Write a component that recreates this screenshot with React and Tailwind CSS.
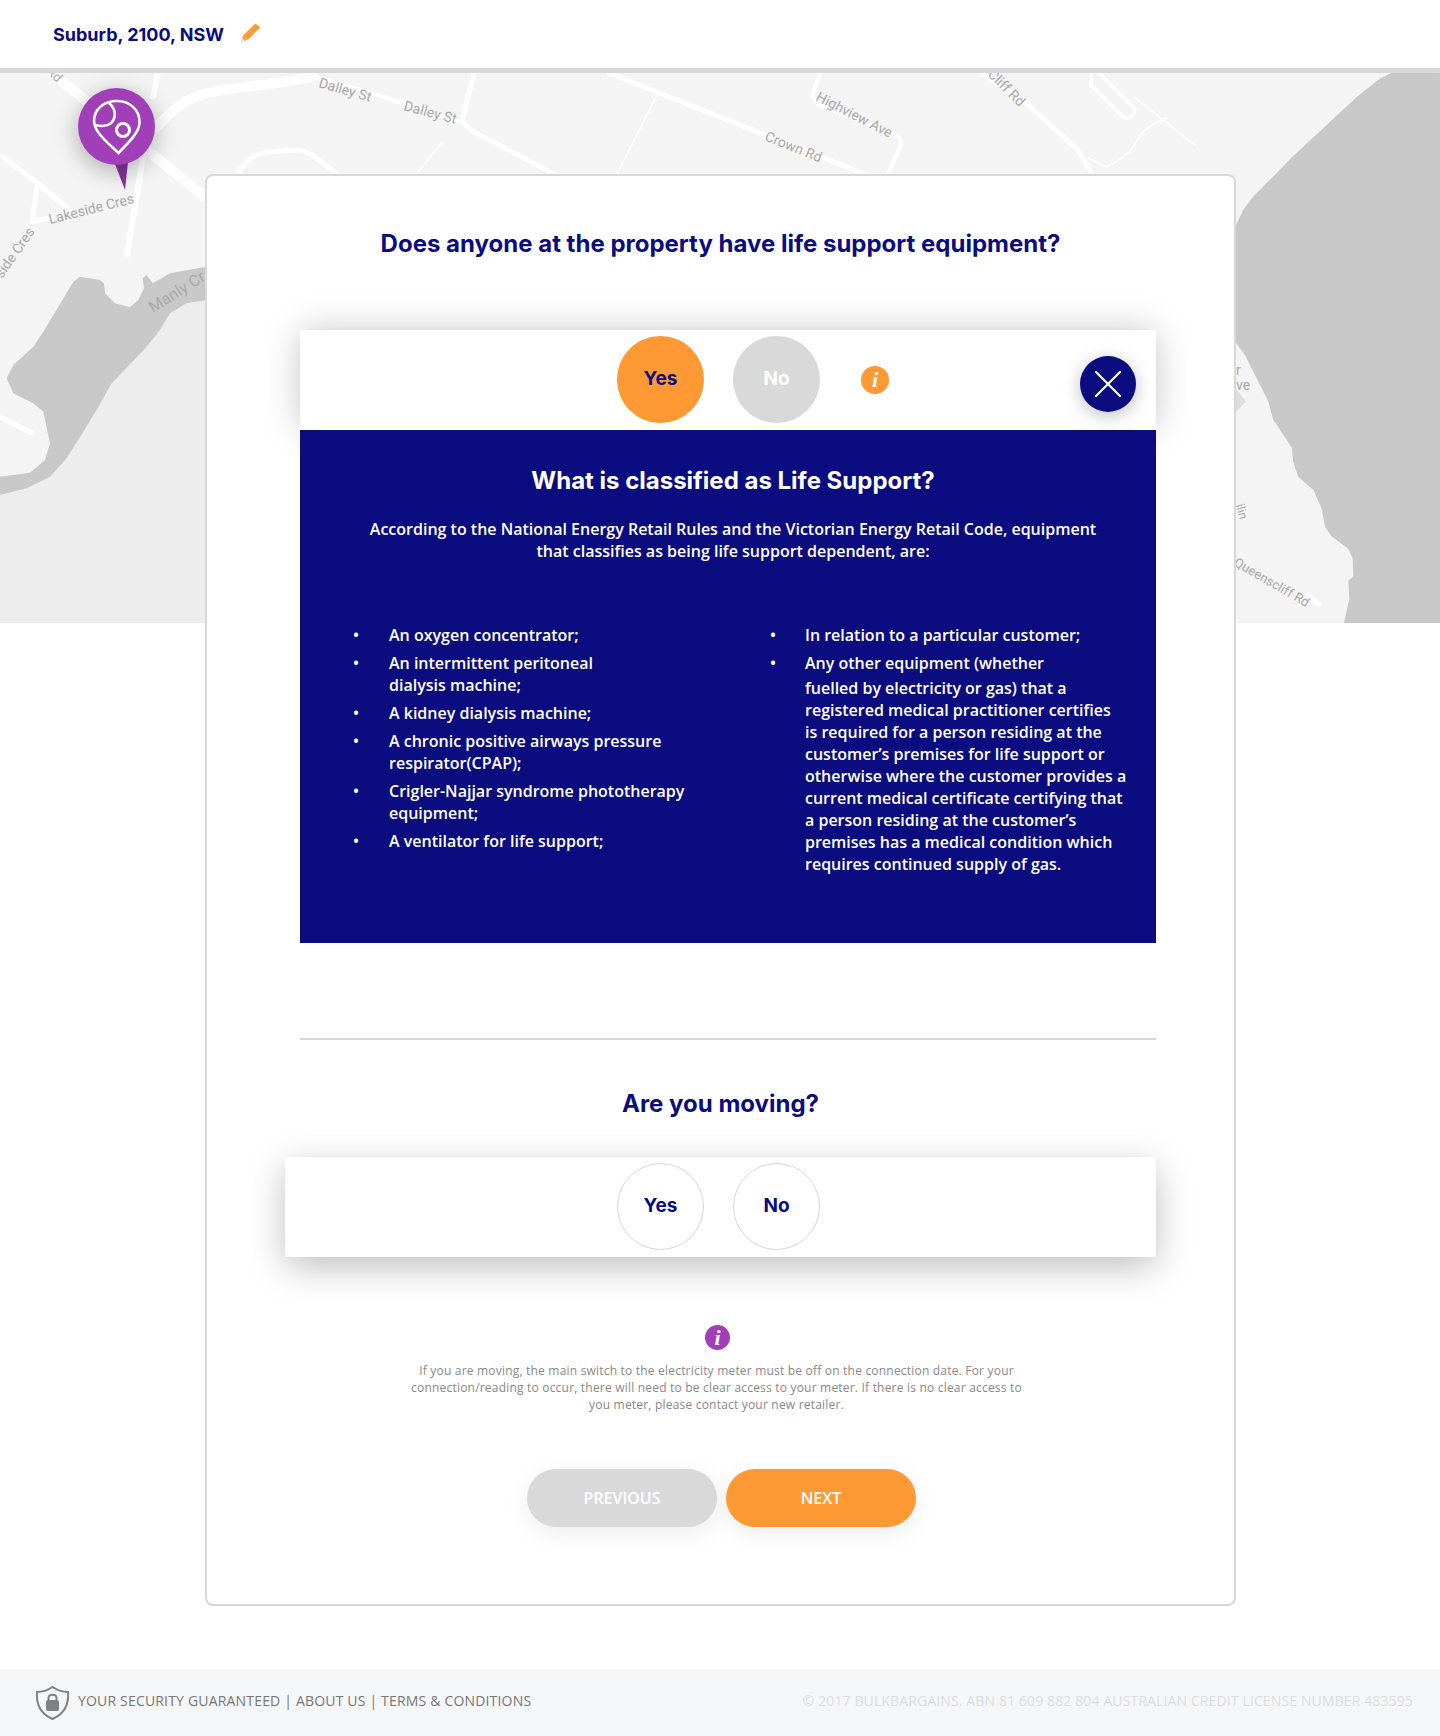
import React from 'react';

const headingFont = "font-['Inter','Lato',sans-serif]";
const bodyFont = "font-['Open_Sans','Noto_Sans',sans-serif]";

const leftItems = [
  ['An oxygen concentrator;'],
  ['An intermittent peritoneal', 'dialysis machine;'],
  ['A kidney dialysis machine;'],
  ['A chronic positive airways pressure', 'respirator(CPAP);'],
  ['Crigler-Najjar syndrome phototherapy', 'equipment;'],
  ['A ventilator for life support;'],
];

const rightBody = [
  'fuelled by electricity or gas) that a',
  'registered medical practitioner certifies',
  'is required for a person residing at the',
  'customer\u2019s premises for life support or',
  'otherwise where the customer provides a',
  'current medical certificate certifying that',
  'a person residing at the customer\u2019s',
  'premises has a medical condition which',
  'requires continued supply of gas.',
];

const MapLabel = ({ x, y, angle, size = 14, children }) => (
  <text
    x={x}
    y={y}
    transform={`rotate(${angle} ${x} ${y})`}
    fontFamily="Roboto, sans-serif"
    fontSize={size}
    fill="#a8a8a8"
  >
    {children}
  </text>
);

const MapBackground = () => (
  <svg className="absolute left-0 top-0" width="1440" height="550" viewBox="0 73 1440 550">
    <rect x="0" y="73" width="1440" height="550" fill="#f4f4f4" />
    <g fill="none" stroke="#ffffff" strokeLinecap="round" strokeLinejoin="round">
      <path d="M157 127 C170 112 185 98 208 93 C240 85 285 85 313 76" strokeWidth="10" />
      <path d="M52 73 L205 197" strokeWidth="10" />
      <path d="M313 76 L377 95 L460 122" strokeWidth="4" />
      <path d="M158 73 L153 97 M143 157 L127 255" strokeWidth="6" />
      <path d="M3 157 L37 183 L70 210 M37 187 L32 222 L53 217" strokeWidth="5" />
      <path d="M237 176 C245 160 255 153 270 152 L293 150 C300 150 308 152 312 155 L340 176" strokeWidth="5" />
      <path d="M474 73 L463 117 C462 125 468 128 476 133 L558 176" strokeWidth="5" />
      <path d="M609 73 L869 176" strokeWidth="5" />
      <path d="M657 95 L616 176 M442 142 L415 176" strokeWidth="1.5" />
      <path d="M820 73 L813 93 C812 98 815 102 820 105 L895 135 C900 137 902 141 900 147 L887 176" strokeWidth="4" />
      <path d="M981 73 L1025 102 L1078 150 L1093 176" strokeWidth="5" />
      <path d="M1091 73 L1091 85 L1122 116 C1128 120 1136 116 1134 108 L1099 73" strokeWidth="4" />
      <path d="M1134 97 L1195 145 M1167 118 C1150 125 1142 132 1139 137 C1133 150 1125 158 1106 167 L1088 158" strokeWidth="1.5" />
    </g>
    <g transform="translate(0 250) scale(0.3333)">
      <path fill="#ededed" d="M0 735 L80 715 L150 680 L200 625 L250 545 L290 480 L335 400 L440 290 L480 240 L510 190 L560 160 L620 150 L620 1120 L0 1120 Z" />
      <path
        fill="#c8c8c8"
        d="M240 80 L300 90 L312 100 L315 130 L345 160 L390 172 L415 150 L432 115 L428 85 L440 75 L458 100 L510 70 L620 50 L620 150 L560 160 L510 190 L480 240 L440 290 L335 400 L290 480 L250 545 L200 625 L150 680 L80 715 L0 735 L0 680 L90 668 L135 630 L150 580 L130 485 L100 460 L40 430 L20 385 L40 345 L100 290 L130 245 L220 95 Z"
      />
      <path d="M0 500 L95 550" fill="none" stroke="#ffffff" strokeWidth="15" strokeLinecap="round" />
    </g>
    <g transform="translate(1190 60) scale(0.3333 0.3691)">
      <path
        fill="#c8c8c8"
        d="M605 35 L750 35 L750 1525 L462 1525 L478 1460 L475 1410 L490 1400 L488 1350 L475 1325 L425 1290 L405 1265 L395 1215 L370 1165 L325 1130 L310 1090 L305 1050 L250 975 L235 925 L165 800 L137 765 L137 450 L160 405 L190 370 L310 260 L500 100 L570 50 Z"
      />
      <path fill="#dedede" d="M137 890 L168 925 L137 955 Z" />
      <path d="M355 1450 L385 1475" fill="none" stroke="#ffffff" strokeWidth="15" strokeLinecap="round" />
    </g>
    <MapLabel x={318} y={87} angle={16}>Dalley St</MapLabel>
    <MapLabel x={403} y={110} angle={15}>Dalley St</MapLabel>
    <MapLabel x={50} y={224} angle={-14}>Lakeside Cres</MapLabel>
    <MapLabel x={2} y={279} angle={-55}>side Cres</MapLabel>
    <MapLabel x={153} y={313} angle={-32} size={16}>Manly Cr</MapLabel>
    <MapLabel x={815} y={100} angle={27}>Highview Ave</MapLabel>
    <MapLabel x={764} y={140} angle={22}>Crown Rd</MapLabel>
    <MapLabel x={987} y={75} angle={45}>Cliff Rd</MapLabel>
    <MapLabel x={1233} y={565} angle={30} size={13}>Queenscliff Rd</MapLabel>
    <MapLabel x={1236} y={375} angle={0}>r</MapLabel>
    <MapLabel x={1236} y={390} angle={0}>ve</MapLabel>
    <MapLabel x={1236} y={505} angle={75} size={12}>ilin</MapLabel>
    <MapLabel x={46} y={72} angle={45} size={13}>Rd</MapLabel>
  </svg>
);

const MapPin = () => (
  <div className="absolute left-[78px] top-[15px] h-[103px] w-[77px]">
    <svg className="absolute left-[36px] top-[74px]" width="16" height="29" viewBox="0 0 16 29">
      <path d="M1 2 L14 0 L11 28 Z" fill="#87339f" />
    </svg>
    <div className="relative flex h-[77px] w-[77px] items-center justify-center rounded-full bg-[#a03fb8] shadow-[0_6px_24px_rgba(0,0,0,0.3)]">
      <svg width="50" height="56" viewBox="0 0 50 56" fill="none" stroke="#ffffff">
        <path d="M25 2 C38 2 48 11 47.5 24 C47 34 36 44 26.5 54 C16 44 2 33 2 22 C2 10 12 2 25 2 Z" strokeWidth="2.6" />
        <path d="M17 4 C24 10 25 19 18 25 C13 28 7 27 3 26" strokeWidth="2.6" />
        <circle cx="31" cy="31" r="6.5" strokeWidth="3" />
      </svg>
    </div>
  </div>
);

const InfoIcon = ({ className }) => (
  <div className={`flex items-center justify-center rounded-full text-white ${className}`}>
    <span className="font-['Liberation_Serif',serif] text-[22px] font-bold italic leading-none">i</span>
  </div>
);

const Choice = ({ label, className }) => (
  <div className={`flex h-[87px] w-[87px] shrink-0 items-center justify-center rounded-full text-[19px] font-bold ${headingFont} ${className}`}>
    {label}
  </div>
);

const LifeSupportPanel = () => (
  <div className="ml-[93px] w-[856px]">
    <div className="flex h-[100px] items-start bg-white pl-[317px] pt-[6px] shadow-[0_0_36px_rgba(0,0,0,0.22)]">
      <Choice label="Yes" className="bg-[#ff9933] text-[#0a0c7f]" />
      <Choice label="No" className="ml-[29px] bg-[#dad9da] text-white" />
      <InfoIcon className="ml-[41px] mt-[30px] h-[28px] w-[28px] bg-[#ff9933]" />
      <button className="ml-[191px] mt-[20px] flex h-[56px] w-[56px] items-center justify-center rounded-full bg-[#0a0c7f] shadow-[0_4px_18px_rgba(0,0,0,0.25)]">
        <svg width="28" height="28" viewBox="0 0 28 28" stroke="#ffffff" strokeWidth="2.2" strokeLinecap="round">
          <path d="M2 2 L26 26 M26 2 L2 26" />
        </svg>
      </button>
    </div>
    <div className={`relative h-[513px] bg-[#0a0c7f] text-white ${bodyFont}`}>
      <h3 className={`pl-[10px] pt-[35px] text-center text-[24px] font-bold leading-[32px] ${headingFont}`}>
        What is classified as Life Support?
      </h3>
      <p className="mt-[21px] pl-[10px] text-center text-[16px] font-semibold leading-[22px]">
        According to the National Energy Retail Rules and the Victorian Energy Retail Code, equipment
        <br />
        that classifies as being life support dependent, are:
      </p>
      <div className="mt-[62px] flex text-[16px] font-semibold leading-[22px]">
        <ul className="ml-[53px] flex w-[417px] flex-col gap-[6px]">
          {leftItems.map((lines) => (
            <li key={lines[0]} className="flex">
              <span className="w-[36px] shrink-0">&bull;</span>
              <span>
                {lines.map((line) => (
                  <span key={line} className="block">{line}</span>
                ))}
              </span>
            </li>
          ))}
        </ul>
        <ul className="flex flex-col gap-[6px]">
          <li className="flex">
            <span className="w-[35px] shrink-0">&bull;</span>
            <span>In relation to a particular customer;</span>
          </li>
          <li className="flex">
            <span className="w-[35px] shrink-0">&bull;</span>
            <span>
              <span className="mb-[3px] block">Any other equipment (whether</span>
              {rightBody.map((line) => (
                <span key={line} className="block">{line}</span>
              ))}
            </span>
          </li>
        </ul>
      </div>
    </div>
  </div>
);

const MovingPanel = () => (
  <div className="ml-[78px] mt-[37px] flex h-[100px] w-[871px] items-start gap-[29px] bg-white pl-[332px] pt-[6px] shadow-[0_10px_36px_rgba(0,0,0,0.25)]">
    <Choice label="Yes" className="border border-[#d8d8d8] bg-white text-[#0a0c7f]" />
    <Choice label="No" className="border border-[#d8d8d8] bg-white text-[#0a0c7f]" />
  </div>
);

const Footer = () => (
  <footer className={`mt-[63px] flex h-[67px] items-center justify-between bg-[#f5f6f8] pl-[36px] pr-[27px] text-[14px] ${bodyFont}`}>
    <div className="flex items-center gap-[9px] text-[#777777]">
      <svg width="33" height="34" viewBox="0 0 33 34" fill="none">
        <path d="M16.5 1 C21 4 26 6 32 6 C33 18 28 28 16.5 33 C5 28 0 18 1 6 C7 6 12 4 16.5 1 Z" stroke="#808080" strokeWidth="2" />
        <rect x="10" y="14" width="13" height="11" rx="2" fill="#808080" />
        <path d="M12.5 14 V12 C12.5 7.500 20.500 7.500 20.500 12 V14" stroke="#808080" strokeWidth="2" />
      </svg>
      <span className="mb-[4px] tracking-[0.18px]">YOUR SECURITY GUARANTEED | ABOUT US | TERMS &amp; CONDITIONS</span>
    </div>
    <span className="mb-[4px] tracking-[0.125px] text-[#dddddd]">© 2017 BULKBARGAINS. ABN 81 609 882 804 AUSTRALIAN CREDIT LICENSE NUMBER 483595</span>
  </footer>
);

const App = () => {
  return (
    <div className="w-[1440px] bg-white">
      <header className="flex h-[73px] items-start border-b-[5px] border-[#d8d8d8] bg-white pl-[53px] pt-[23px]">
        <span className={`text-[18px] font-bold leading-[24px] text-[#0a0c7f] ${headingFont}`}>Suburb, 2100, NSW</span>
        <svg className="ml-[17px]" width="20" height="20" viewBox="0 0 20 20">
          <path d="M14.500 0.500 L19 4.500 L7 16.500 L2 12.500 Z" fill="#ff9933" />
          <path d="M2 12.500 L7 16.500 L0.500 19 Z" fill="#ff9933" />
          <path d="M1.800 15.500 L3.800 17.300 L1 18.500 Z" fill="#ffffff" />
        </svg>
      </header>

      <main className="relative overflow-hidden pt-[101px]">
        <MapBackground />
        <MapPin />
        <div className="relative ml-[205px] h-[1432px] w-[1031px] rounded-lg border-2 border-[#d8d8d8] bg-white pt-[52px]">
          <h2 className={`text-center text-[24px] font-bold leading-[32px] text-[#0a0c7f] ${headingFont}`}>
            Does anyone at the property have life support equipment?
          </h2>
          <div className="mt-[70px]">
            <LifeSupportPanel />
          </div>
          <div className="ml-[93px] mt-[95px] h-[2px] w-[856px] bg-[#d8d8d8]" />
          <h2 className={`mt-[48px] text-center text-[24px] font-bold leading-[32px] text-[#0a0c7f] ${headingFont}`}>
            Are you moving?
          </h2>
          <MovingPanel />
          <InfoIcon className="ml-[498px] mt-[68px] h-[25px] w-[25px] bg-[#a03fb8]" />
          <p className={`mt-[12px] pr-[8px] text-center text-[12px] leading-[17px] tracking-[0.2px] text-[#888888] ${bodyFont}`}>
            If you are moving, the main switch to the electricity meter must be off on the connection date. For your
            <br />
            connection/reading to occur, there will need to be clear access to your meter. If there is no clear access to
            <br />
            you meter, please contact your new retailer.
          </p>
          <div className={`ml-[320px] mt-[56px] flex gap-[9px] text-[16px] font-semibold ${bodyFont}`}>
            <button className="h-[58px] w-[190px] rounded-full bg-[#dad9da] text-white shadow-[0_6px_24px_rgba(0,0,0,0.08)]">PREVIOUS</button>
            <button className="h-[58px] w-[190px] rounded-full bg-[#ff9933] text-white shadow-[0_6px_24px_rgba(0,0,0,0.08)]">NEXT</button>
          </div>
        </div>
      </main>

      <Footer />
    </div>
  );
};

export default App;
